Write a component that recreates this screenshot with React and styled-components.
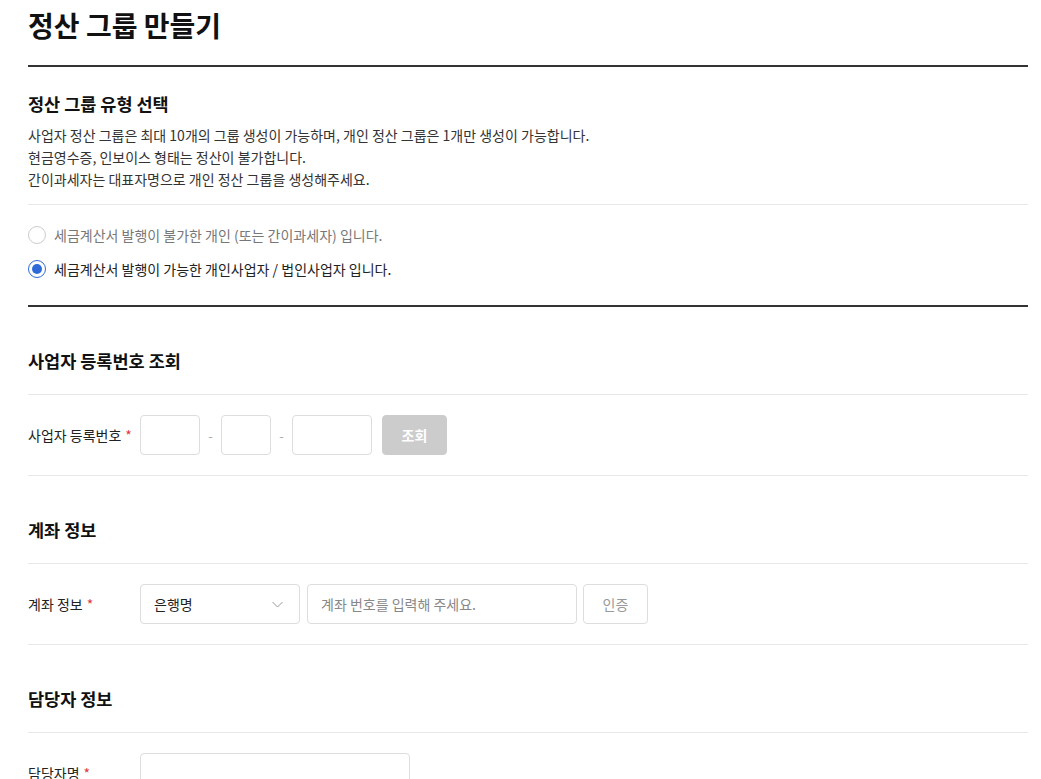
import React from "react";
import styled, { createGlobalStyle } from "styled-components";

const GlobalStyle = createGlobalStyle`
  body {
    margin: 0;
    background: #fff;
    font-family: "Noto Sans CJK KR", "Noto Sans", sans-serif;
    color: #222;
  }
`;

const Page = styled.div`
  padding: 0 13px 0 28px;
`;

const PageHeader = styled.header`
  padding-bottom: 15px;
  border-bottom: 2px solid #333;
`;

const PageTitle = styled.h1`
  margin: 0;
  font-size: 28px;
  line-height: 50px;
  font-weight: 700;
  color: #111;
`;

const TypeBlock = styled.section`
  border-bottom: 2px solid #333;
`;

const TypeIntro = styled.div`
  padding: 24px 0 14px;
  border-bottom: 1px solid #e8e8e8;
`;

const IntroTitle = styled.h2`
  margin: 0 0 7px;
  font-size: 17.5px;
  line-height: 26px;
  font-weight: 700;
  color: #111;
`;

const Desc = styled.p`
  margin: 0;
  font-size: 14px;
  line-height: 22px;
  color: #333;
`;

const RadioList = styled.div`
  display: flex;
  flex-direction: column;
  gap: 14px;
  padding: 20px 0 26px;
`;

const RadioLabel = styled.label`
  display: flex;
  align-items: center;
  gap: 8px;
  font-size: 14px;
  line-height: 20px;
  color: ${(p) => (p.$checked ? "#222" : "#777")};
  cursor: pointer;
`;

const RadioCircle = styled.span`
  box-sizing: border-box;
  width: 18px;
  height: 18px;
  border-radius: 50%;
  border: 1px solid ${(p) => (p.$checked ? "#2e6bd9" : "#ccc")};
  display: flex;
  align-items: center;
  justify-content: center;
  &::after {
    content: "";
    display: ${(p) => (p.$checked ? "block" : "none")};
    width: 10px;
    height: 10px;
    border-radius: 50%;
    background: #2e6bd9;
  }
`;

const SectionTitle = styled.h2`
  margin: 0;
  padding: 41px 0 20px;
  font-size: 17.5px;
  line-height: 26px;
  font-weight: 700;
  color: #111;
  border-bottom: 1px solid #e8e8e8;
`;

const FormRow = styled.div`
  display: flex;
  align-items: center;
  padding: 20px 0;
  border-bottom: 1px solid #e8e8e8;
`;

const Label = styled.div`
  width: 112px;
  flex-shrink: 0;
  font-size: 14px;
  color: #222;
`;

const Req = styled.span`
  color: #e0393e;
  margin-left: 4px;
`;

const Fields = styled.div`
  display: flex;
  align-items: center;
  gap: ${(p) => p.$gap || 7}px;
`;

const TextInput = styled.input`
  box-sizing: border-box;
  width: ${(p) => p.$w}px;
  height: 40px;
  border: 1px solid #ddd;
  border-radius: 4px;
  padding: 0 13px;
  font-family: inherit;
  font-size: 14px;
  color: #222;
  outline: none;
  &::placeholder {
    color: #888;
  }
`;

const Dash = styled.span`
  width: 5px;
  text-align: center;
  font-size: 13px;
  color: #aaa;
`;

const Button = styled.button`
  box-sizing: border-box;
  width: 65px;
  height: 40px;
  margin-left: ${(p) => p.$offset || 0}px;
  border-radius: 4px;
  font-family: inherit;
  font-size: 14px;
  font-weight: ${(p) => (p.$filled ? 700 : 400)};
  color: ${(p) => (p.$filled ? "#fff" : "#999")};
  background: ${(p) => (p.$filled ? "#cccccc" : "#fff")};
  border: 1px solid ${(p) => (p.$filled ? "#cccccc" : "#ddd")};
  cursor: pointer;
`;

const Select = styled.div`
  box-sizing: border-box;
  width: 160px;
  height: 40px;
  border: 1px solid #ddd;
  border-radius: 4px;
  padding: 0 16px 0 13px;
  display: flex;
  align-items: center;
  justify-content: space-between;
  font-size: 14px;
  color: #222;
`;

const options = [
  { text: "세금계산서 발행이 불가한 개인 (또는 간이과세자) 입니다.", checked: false },
  { text: "세금계산서 발행이 가능한 개인사업자 / 법인사업자 입니다.", checked: true },
];

export default function App() {
  return (
    <>
      <GlobalStyle />
      <Page>
        <PageHeader>
          <PageTitle>정산 그룹 만들기</PageTitle>
        </PageHeader>

        <TypeBlock>
          <TypeIntro>
            <IntroTitle>정산 그룹 유형 선택</IntroTitle>
            <Desc>사업자 정산 그룹은 최대 10개의 그룹 생성이 가능하며, 개인 정산 그룹은 1개만 생성이 가능합니다.</Desc>
            <Desc>현금영수증, 인보이스 형태는 정산이 불가합니다.</Desc>
            <Desc>간이과세자는 대표자명으로 개인 정산 그룹을 생성해주세요.</Desc>
          </TypeIntro>
          <RadioList>
            {options.map((o) => (
              <RadioLabel key={o.text} $checked={o.checked}>
                <RadioCircle $checked={o.checked} />
                {o.text}
              </RadioLabel>
            ))}
          </RadioList>
        </TypeBlock>

        <SectionTitle>사업자 등록번호 조회</SectionTitle>
        <FormRow>
          <Label>
            사업자 등록번호<Req>*</Req>
          </Label>
          <Fields $gap={8}>
            <TextInput $w={60} />
            <Dash>-</Dash>
            <TextInput $w={50} />
            <Dash>-</Dash>
            <TextInput $w={80} />
            <Button $filled $offset={2}>조회</Button>
          </Fields>
        </FormRow>

        <SectionTitle>계좌 정보</SectionTitle>
        <FormRow>
          <Label>
            계좌 정보<Req>*</Req>
          </Label>
          <Fields $gap={7}>
            <Select>
              은행명
              <svg width="11" height="7" viewBox="0 0 11 7" fill="none">
                <path d="M0.5 1L5.5 6L10.5 1" stroke="#999" strokeWidth="1" />
              </svg>
            </Select>
            <TextInput $w={270} placeholder="계좌 번호를 입력해 주세요." />
            <Button $offset={-1}>인증</Button>
          </Fields>
        </FormRow>

        <SectionTitle>담당자 정보</SectionTitle>
        <FormRow>
          <Label>
            담당자명<Req>*</Req>
          </Label>
          <Fields>
            <TextInput $w={270} />
          </Fields>
        </FormRow>
      </Page>
    </>
  );
}
